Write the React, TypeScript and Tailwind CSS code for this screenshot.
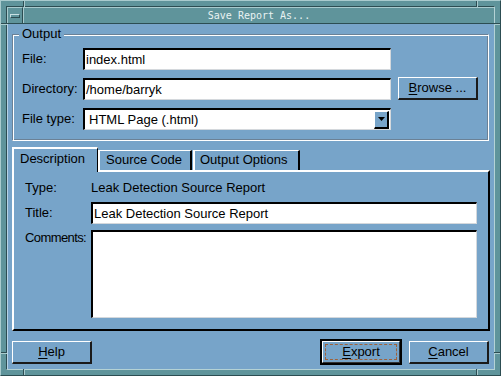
import React from "react";

const BODY = "bg-[#77a4c9]";

const Field = ({ value, w, h = "h-[22px]" }: { value?: string; w: string; h?: string }) => (
  <div
    className={`${w} ${h} bg-white border-t-2 border-l-2 border-t-black border-l-black border-b border-r border-b-[#d4d8dc] border-r-[#d4d8dc] flex items-start pl-[1px] pt-[1px] text-[13px] leading-[17px] text-black`}
  >
    {value}
  </div>
);

const Button = ({ first, rest, w = "w-[80px]" }: { first: string; rest: string; w?: string }) => (
  <div
    className={`${w} h-[23px] border-t border-l border-t-white border-l-white border-b-2 border-r-2 border-b-[#1a1a1a] border-r-[#1a1a1a] flex items-center justify-center text-[13px] text-black`}
  >
    <span>
      <span className="underline underline-offset-2">{first}</span>
      {rest}
    </span>
  </div>
);

export default function App() {
  return (
    <div className="relative w-[501px] h-[376px] bg-[#5f949b] border-t border-l border-t-[#a9cbce] border-l-[#a9cbce] border-b border-r border-b-[#2c4d52] border-r-[#2c4d52] p-[5px] font-['Liberation_Sans',Arial,sans-serif]">
      {/* resize corner marks */}
      <div className="absolute left-[22px] top-0 w-[2px] h-[6px] border-l border-l-[#2c4d52] border-r border-r-[#a9cbce]" />
      <div className="absolute left-[475px] top-0 w-[2px] h-[6px] border-l border-l-[#2c4d52] border-r border-r-[#a9cbce]" />
      <div className="absolute left-[22px] bottom-0 w-[2px] h-[6px] border-l border-l-[#2c4d52] border-r border-r-[#a9cbce]" />
      <div className="absolute left-[475px] bottom-0 w-[2px] h-[6px] border-l border-l-[#2c4d52] border-r border-r-[#a9cbce]" />
      <div className="absolute left-0 top-[22px] w-[6px] h-[2px] border-t border-t-[#2c4d52] border-b border-b-[#a9cbce]" />
      <div className="absolute right-0 top-[22px] w-[6px] h-[2px] border-t border-t-[#2c4d52] border-b border-b-[#a9cbce]" />
      <div className="absolute left-0 top-[351px] w-[6px] h-[2px] border-t border-t-[#2c4d52] border-b border-b-[#a9cbce]" />
      <div className="absolute right-0 top-[351px] w-[6px] h-[2px] border-t border-t-[#2c4d52] border-b border-b-[#a9cbce]" />

      <div className="w-full h-full border-t border-l border-t-[#2c4d52] border-l-[#2c4d52] border-b border-r border-b-[#b4d2d5] border-r-[#b4d2d5] flex flex-col">
        {/* title bar */}
        <div className="h-[17px] flex border-b border-b-[#2c4d52] bg-[#5f949b]">
          <div className="w-[16px] h-[16px] border-t border-l border-t-[#a9cbce] border-l-[#a9cbce] border-r border-r-[#2c4d52] flex items-center justify-center">
            <div className="w-[10px] h-[4px] border-t border-l border-t-[#c8e0e2] border-l-[#c8e0e2] border-b border-r border-b-[#2c4d52] border-r-[#2c4d52]" />
          </div>
          <div className="flex-1 border-t border-l border-t-[#a9cbce] border-l-[#a9cbce] flex items-center justify-center text-[10px] leading-none text-[#e8f2f2] font-['DejaVu_Sans_Mono',monospace]">
            Save Report As...
          </div>
        </div>

        {/* body */}
        <div className={`flex-1 ${BODY} border-l border-l-[#b8d3e6] pl-[4px] flex flex-col text-black text-[13px]`}>
          {/* Output group */}
          <div className="relative mt-[10px] w-[477px] h-[107px] border border-t-[#6b8196] border-l-[#6b8196] border-b-white border-r-white shadow-[inset_1px_1px_0_#fff,inset_-1px_-1px_0_#6b8196] pl-[9px] pt-[13px] flex flex-col gap-[8px]">
            <div className={`absolute left-[6px] -top-[9px] px-[3px] ${BODY} leading-[16px]`}>Output</div>
            <div className="flex items-center">
              <div className="w-[61px]">File:</div>
              <Field value="index.html" w="w-[308px]" />
            </div>
            <div className="flex items-center">
              <div className="w-[61px]">Directory:</div>
              <Field value="/home/barryk" w="w-[308px]" />
              <div className="ml-[7px] -mt-[1px]">
                <Button first="B" rest="rowse ..." />
              </div>
            </div>
            <div className="flex items-center">
              <div className="w-[61px]">File type:</div>
              <div className="w-[308px] h-[22px] bg-white border-t-2 border-l-2 border-t-black border-l-black border-b border-r border-b-[#d4d8dc] border-r-[#d4d8dc] flex items-center">
                <div className="flex-1 pl-[4px] leading-[17px]">HTML Page (.html)</div>
                <div className={`w-[15px] h-[18px] mr-[1px] ${BODY} border-t border-l border-t-white border-l-white border-b-2 border-r-2 border-b-black border-r-black flex items-center justify-center`}>
                  <svg width="7" height="4" viewBox="0 0 7 4">
                    <polygon points="0,0 7,0 3.5,4" fill="#000" />
                  </svg>
                </div>
              </div>
            </div>
          </div>

          {/* tabs */}
          <div className="mt-[6px] h-[23px] flex items-end">
            <div className={`relative z-10 w-[86px] h-[25px] -mb-[2px] ${BODY} border-t-2 border-l-2 border-t-white border-l-white border-r border-r-black pl-[6px] pt-[2px] leading-[16px]`}>
              Description
            </div>
            <div className="w-[94px] h-[20px] border-t border-l-2 border-t-white border-l-white border-r-2 border-r-black pl-[6px] pt-[1px] leading-[16px]">
              Source Code
            </div>
            <div className="ml-[1px] w-[107px] h-[20px] border-t border-l-2 border-t-white border-l-white border-r-2 border-r-black pl-[5px] pt-[1px] leading-[16px]">
              Output Options
            </div>
          </div>

          {/* panel */}
          <div className="w-[478px] h-[161px] border-2 border-t-white border-l-white border-b-black border-r-black pl-[11px] pt-[6px] flex flex-col">
            <div className="h-[20px] flex items-center">
              <div className="w-[66px]">Type:</div>
              <div>Leak Detection Source Report</div>
            </div>
            <div className="mt-[4px] flex items-center">
              <div className="w-[66px]">Title:</div>
              <Field value="Leak Detection Source Report" w="w-[386px]" />
            </div>
            <div className="mt-[6px] flex items-start">
              <div className="w-[66px] leading-[15px] tracking-[-0.6px]">Comments:</div>
              <Field w="w-[386px]" h="h-[88px]" />
            </div>
          </div>

          {/* bottom buttons */}
          <div className="mt-[8px] w-[477px] h-[26px] flex items-center">
            <Button first="H" rest="elp" />
            <div className="flex-1" />
            <div className="w-[82px] h-[26px] border-2 border-black">
              <div className="w-full h-full border-t border-l border-t-white border-l-white border-b border-r border-b-[#333] border-r-[#333] p-[2px]">
                <div className="w-full h-full border border-dashed border-[#a0623a] flex items-center justify-center">
                  <span>
                    <span className="underline underline-offset-2">E</span>xport
                  </span>
                </div>
              </div>
            </div>
            <div className="ml-[7px]">
              <Button first="C" rest="ancel" />
            </div>
          </div>
        </div>
      </div>
    </div>
  );
}
